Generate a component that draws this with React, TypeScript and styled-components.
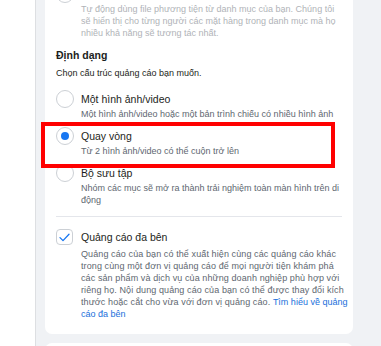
import React from "react";
import styled, { createGlobalStyle } from "styled-components";

const Global = createGlobalStyle`
  html, body { margin: 0; padding: 0; }
  body {
    width: 381px;
    height: 346px;
    overflow: hidden;
    background: #ffffff;
    font-family: "Liberation Sans", Arial, Helvetica, sans-serif;
    -webkit-font-smoothing: antialiased;
  }
`;

const Page = styled.div`
  position: relative;
  display: flex;
  width: 381px;
  height: 346px;
  overflow: hidden;
`;

const SideRail = styled.div`
  flex: 0 0 35px;
  background: #ffffff;
  border-right: 1px solid #dddfe2;
`;

const Main = styled.div`
  flex: 1;
  background: #f0f2f5;
  display: flex;
  flex-direction: column;
  gap: 9px;
  padding-left: 9px;
  overflow: hidden;
`;

const Card = styled.div<{ $offset?: number }>`
  flex: 0 0 auto;
  width: 308px;
  box-sizing: border-box;
  background: #ffffff;
  border-radius: 7px;
  padding: 12px 8px 14px 11px;
  margin-top: ${(p) => p.$offset ?? 0}px;
  display: flex;
  flex-direction: column;
`;

const NextCard = styled.div`
  flex: 0 0 40px;
  width: 308px;
  background: #ffffff;
  border-radius: 7px;
`;

const Option = styled.label`
  display: grid;
  grid-template-columns: 18px 1fr;
  column-gap: 7px;
  align-items: start;
  margin-bottom: 9px;
`;

const Radio = styled.span<{ $checked?: boolean }>`
  width: 18px;
  height: 18px;
  box-sizing: border-box;
  border-radius: 50%;
  border: 1px solid #ccd0d5;
  background: #ffffff;
  display: flex;
  align-items: center;
  justify-content: center;
  margin-top: -2px;
  &::after {
    content: "";
    width: 8px;
    height: 8px;
    border-radius: 50%;
    background: ${(p) => (p.$checked ? "#1877f2" : "transparent")};
  }
`;

const OptionText = styled.div`
  display: flex;
  flex-direction: column;
`;

const Title = styled.div<{ $muted?: boolean }>`
  font-size: 10.5px;
  line-height: 14px;
  color: ${(p) => (p.$muted ? "#bec3c9" : "#1c1e21")};
  margin-bottom: 2px;
`;

const Sub = styled.div<{ $muted?: boolean }>`
  font-size: 9px;
  line-height: 12px;
  color: ${(p) => (p.$muted ? "#b0b3b8" : "#606770")};
`;

const SectionTitle = styled.div`
  font-size: 10.5px;
  line-height: 14px;
  font-weight: bold;
  color: #1c1e21;
  margin-top: 0px;
  margin-bottom: 5px;
`;

const SectionHint = styled.div`
  font-size: 9px;
  line-height: 12px;
  color: #1c1e21;
  margin-bottom: 13px;
`;

const Divider = styled.div`
  height: 1px;
  background: #e4e6eb;
  margin: 1px 3px 13px 0;
`;

const CheckRow = styled.label`
  display: grid;
  grid-template-columns: 18px 1fr;
  column-gap: 7px;
  align-items: start;
`;

const CheckBox = styled.span`
  width: 17px;
  height: 16px;
  box-sizing: border-box;
  border-radius: 4px;
  border: 1px solid #ccd0d5;
  background: #ffffff;
  display: flex;
  align-items: center;
  justify-content: center;
  margin-top: -1px;
`;

const CheckTitle = styled(Title)`
  margin-bottom: 4px;
`;

const Desc = styled(Sub)`
  white-space: nowrap;
  letter-spacing: 0.1px;
`;

const Link = styled.a`
  color: #216fdb;
  text-decoration: none;
  letter-spacing: 0;
`;

const Highlight = styled.div`
  position: absolute;
  left: 41px;
  top: 122px;
  width: 294px;
  height: 46px;
  box-sizing: border-box;
  border: 4px solid #ff0000;
  pointer-events: none;
`;

export default function App() {
  return (
    <>
      <Global />
      <Page>
        <SideRail />
        <Main>
          <Card $offset={-25}>
            <Option>
              <Radio />
              <OptionText>
                <Title $muted>Danh mục</Title>
                <Sub $muted>
                  Tự động dùng file phương tiện từ danh mục của bạn. Chúng tôi
                  sẽ hiển thị cho từng người các mặt hàng trong danh mục mà họ
                  nhiều khả năng sẽ tương tác nhất.
                </Sub>
              </OptionText>
            </Option>

            <SectionTitle>Định dạng</SectionTitle>
            <SectionHint>Chọn cấu trúc quảng cáo bạn muốn.</SectionHint>

            <Option>
              <Radio />
              <OptionText>
                <Title>Một hình ảnh/video</Title>
                <Sub>Một hình ảnh/video hoặc một bản trình chiếu có nhiều hình ảnh</Sub>
              </OptionText>
            </Option>

            <Option>
              <Radio $checked />
              <OptionText>
                <Title>Quay vòng</Title>
                <Sub>Từ 2 hình ảnh/video có thể cuộn trở lên</Sub>
              </OptionText>
            </Option>

            <Option>
              <Radio />
              <OptionText>
                <Title>Bộ sưu tập</Title>
                <Sub>Nhóm các mục sẽ mở ra thành trải nghiệm toàn màn hình trên di động</Sub>
              </OptionText>
            </Option>

            <Divider />

            <CheckRow>
              <CheckBox>
                <svg width="11" height="9" viewBox="0 0 11 9" fill="none">
                  <path d="M1 4.6 L4 7.6 L10 1.2" stroke="#1877f2" strokeWidth="1.3" strokeLinecap="round" strokeLinejoin="round" />
                </svg>
              </CheckBox>
              <OptionText>
                <CheckTitle>Quảng cáo đa bên</CheckTitle>
                <Desc>
                  Quảng cáo của bạn có thể xuất hiện cùng các quảng cáo khác
                  <br />
                  trong cùng một đơn vị quảng cáo để mọi người tiện khám phá
                  <br />
                  các sản phẩm và dịch vụ của những doanh nghiệp phù hợp với
                  <br />
                  riêng họ. Nội dung quảng cáo của bạn có thể được thay đổi kích
                  <br />
                  thước hoặc cắt cho vừa với đơn vị quảng cáo.{" "}
                  <Link href="#">
                    Tìm hiểu về quảng
                    <br />
                    cáo đa bên
                  </Link>
                </Desc>
              </OptionText>
            </CheckRow>
          </Card>
          <NextCard />
        </Main>
        <Highlight />
      </Page>
    </>
  );
}
